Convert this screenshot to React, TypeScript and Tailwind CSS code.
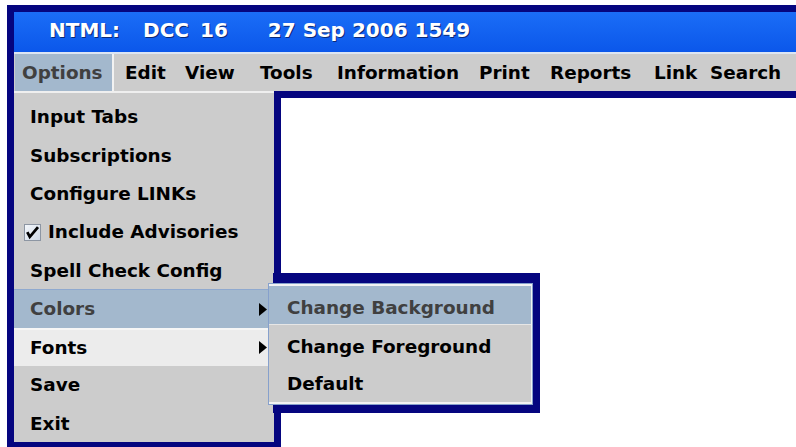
import React from "react";

const font = { fontFamily: '"DejaVu Sans", "Liberation Sans", sans-serif' };

type MenuItem = { label: string; start: number };

const menus: MenuItem[] = [
  { label: "Edit", start: 125 },
  { label: "View", start: 185 },
  { label: "Tools", start: 260 },
  { label: "Information", start: 337 },
  { label: "Print", start: 479 },
  { label: "Reports", start: 550 },
  { label: "Link", start: 654 },
  { label: "Search", start: 710 },
];

function Arrow() {
  return (
    <svg width="8" height="13" viewBox="0 0 8 13" className="ml-auto mr-[7px] shrink-0">
      <path d="M0 0 L8 6.5 L0 13 Z" fill="#000" />
    </svg>
  );
}

function CheckBox() {
  return (
    <div className="w-[17px] h-[17px] shrink-0 border border-[#8d96a3] bg-gradient-to-br from-[#f4f7fb] to-[#cfd9e6] flex items-center justify-center">
      <svg width="15" height="15" viewBox="0 0 15 15">
        <path d="M2.3 7.2 L4.8 11.8 L13 2.2" fill="none" stroke="#000" strokeWidth="2.8" strokeLinejoin="miter" />
      </svg>
    </div>
  );
}

export default function App() {
  return (
    <div className="relative w-[796px] h-[447px] overflow-hidden bg-white font-bold" style={font}>
      {/* main window frame */}
      <div className="ml-[7px] mt-[5px] h-[442px] bg-[#05057f] pl-[7px] pt-[7px] flex flex-col">
        <div className="h-[40px] shrink-0 bg-gradient-to-b from-[#1b6df7] to-[#0b57ea] flex items-center pl-[35px] pb-[4px] text-white text-[20px] whitespace-nowrap [text-shadow:1px_1px_0_#0a2a78]">
          <span>NTML:</span>
          <span className="ml-[23px]">DCC</span>
          <span className="ml-[11px]">16</span>
          <span className="ml-[40px]">27 Sep 2006 1549</span>
        </div>
        <div className="h-[2px] shrink-0 bg-[#dce5f3]" />
        <div className="h-[37px] shrink-0 bg-[#cccccc] flex items-stretch text-[18.4px] whitespace-nowrap overflow-hidden">
          <div className="ml-[1px] w-[97px] shrink-0 bg-[#a3b8cd] text-[#404040] flex items-center pl-[7px]">Options</div>
          <div className="w-[2px] shrink-0 bg-[#f2f2f2]" />
          {menus.map((m, i) => {
            const next = i + 1 < menus.length ? menus[i + 1].start : 900;
            const left = i === 0 ? m.start - 114 : 0;
            return (
              <div
                key={m.label}
                className="shrink-0 flex items-center text-black"
                style={{ marginLeft: left, width: next - m.start }}
              >
                {m.label}
              </div>
            );
          })}
        </div>
        <div className="mt-[7px] flex-1 bg-white" />
      </div>

      {/* Options popup */}
      <div className="absolute left-[7px] top-[91px] w-[274px] h-[358px] bg-[#05057f] px-[7px] pb-[7px]">
        <div className="h-full bg-[#cccccc] border-t-2 border-[#efefef] pt-[5px] text-[18.4px] text-black whitespace-nowrap">
          <div className="h-[38.3px] flex items-center pl-[16px]">Input Tabs</div>
          <div className="h-[38.3px] flex items-center pl-[16px]">Subscriptions</div>
          <div className="h-[38.3px] flex items-center pl-[16px]">Configure LINKs</div>
          <div className="h-[38.3px] flex items-center pl-[10px] gap-[7px]">
            <CheckBox />
            <span>Include Advisories</span>
          </div>
          <div className="h-[38.3px] flex items-center pl-[16px]">Spell Check Config</div>
          <div className="h-[38.3px] flex items-center pl-[16px] bg-[#a3b8cd] text-[#404040] border-t border-[#8fa9cf]">
            <span>Colors</span>
            <Arrow />
          </div>
          <div className="h-[38.3px] flex items-center pl-[16px] bg-[#ececec] border-t-2 border-[#f6f6f6]">
            <span>Fonts</span>
            <Arrow />
          </div>
          <div className="h-[38.3px] flex items-center pl-[16px]">Save</div>
          <div className="h-[38.3px] flex items-center pl-[16px]">Exit</div>
        </div>
      </div>

      {/* Colors submenu */}
      <div className="absolute left-[273px] top-[273px] w-[267px] h-[140px] bg-[#05057f]" />
      <div className="absolute left-[268px] top-[283px] w-[265px] h-[122px] bg-[#cccccc] border border-[#86a0cc] text-[18.4px] whitespace-nowrap">
        <div className="h-full border-t-2 border-b-2 border-r border-[#f2f2f2]">
          <div className="h-[38px] flex items-center pl-[18px] pt-[6px] bg-[#a3b8cd] text-[#404040]">Change Background</div>
          <div className="h-[38px] flex items-center pl-[18px] pt-[6px] text-black border-t border-[#e6e6e6]">Change Foreground</div>
          <div className="h-[38px] flex items-center pl-[18px] pt-[6px] text-black">Default</div>
        </div>
      </div>
    </div>
  );
}
